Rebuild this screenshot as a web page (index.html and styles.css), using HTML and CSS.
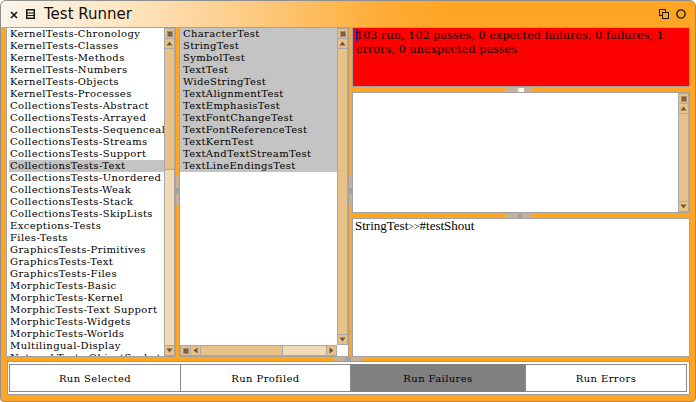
FILE: index.html
```html
<!DOCTYPE html>
<html>
<head>
<meta charset="utf-8">
<link rel="stylesheet" href="styles.css">
</head>
<body>
<div class="window">
  <div class="titlebar">
    <svg class="ic-close" width="8" height="8" viewBox="0 0 8 8"><path d="M1 1L7 7M7 1L1 7" stroke="#1a1a1a" stroke-width="1.7"/></svg>
    <svg class="ic-menu" width="9" height="10" viewBox="0 0 9 10"><rect x="0.75" y="0.75" width="7.5" height="8.5" fill="none" stroke="#1a1a1a" stroke-width="1.5"/><path d="M1 4h7M1 6.5h7" stroke="#1a1a1a" stroke-width="1"/></svg>
    <span class="title">Test Runner</span>
    <span class="tb-right">
      <svg class="ic-collapse" width="10" height="10" viewBox="0 0 10 10"><rect x="0.5" y="0.5" width="6" height="6" fill="none" stroke="#1a1a1a"/><rect x="3.5" y="3.5" width="6" height="6" fill="#ffa524" stroke="#1a1a1a"/></svg>
      <svg class="ic-circle" width="10" height="10" viewBox="0 0 10 10"><circle cx="5" cy="5" r="4.1" fill="none" stroke="#1a1a1a" stroke-width="1.4"/></svg>
    </span>
  </div>

  <div class="main">
    <div class="pane lpane">
      <ul class="list cats">
        <li>KernelTests-Chronology</li>
        <li>KernelTests-Classes</li>
        <li>KernelTests-Methods</li>
        <li>KernelTests-Numbers</li>
        <li>KernelTests-Objects</li>
        <li>KernelTests-Processes</li>
        <li>CollectionsTests-Abstract</li>
        <li>CollectionsTests-Arrayed</li>
        <li>CollectionsTests-Sequenceable</li>
        <li>CollectionsTests-Streams</li>
        <li>CollectionsTests-Support</li>
        <li class="sel">CollectionsTests-Text</li>
        <li>CollectionsTests-Unordered</li>
        <li>CollectionsTests-Weak</li>
        <li>CollectionsTests-Stack</li>
        <li>CollectionsTests-SkipLists</li>
        <li>Exceptions-Tests</li>
        <li>Files-Tests</li>
        <li>GraphicsTests-Primitives</li>
        <li>GraphicsTests-Text</li>
        <li>GraphicsTests-Files</li>
        <li>MorphicTests-Basic</li>
        <li>MorphicTests-Kernel</li>
        <li>MorphicTests-Text Support</li>
        <li>MorphicTests-Widgets</li>
        <li>MorphicTests-Worlds</li>
        <li>Multilingual-Display</li>
        <li>NetworkTests-ObjectSocket</li>
      </ul>
      <div class="vs">
        <div class="btn"><span class="sq"></span></div>
        <div class="btn"><svg width="7" height="5" viewBox="0 0 7 5"><path d="M0.5 4.5H6.5L3.5 0.5Z" fill="#6f5737"/></svg></div>
        <div class="trk"><div class="thumb cat-thumb"></div></div>
        <div class="btn"><svg width="7" height="5" viewBox="0 0 7 5"><path d="M0.5 0.5H6.5L3.5 4.5Z" fill="#6f5737"/></svg></div>
      </div>
    </div>

    <div class="vgap"><div class="vhandle"></div></div>

    <div class="pane mpane">
      <ul class="list classes">
        <li class="sel">CharacterTest</li>
        <li class="sel">StringTest</li>
        <li class="sel">SymbolTest</li>
        <li class="sel">TextTest</li>
        <li class="sel">WideStringTest</li>
        <li class="sel">TextAlignmentTest</li>
        <li class="sel">TextEmphasisTest</li>
        <li class="sel">TextFontChangeTest</li>
        <li class="sel">TextFontReferenceTest</li>
        <li class="sel">TextKernTest</li>
        <li class="sel">TextAndTextStreamTest</li>
        <li class="sel">TextLineEndingsTest</li>
      </ul>
      <div class="vs">
        <div class="btn"><span class="sq"></span></div>
        <div class="btn"><svg width="7" height="5" viewBox="0 0 7 5"><path d="M0.5 4.5H6.5L3.5 0.5Z" fill="#6f5737"/></svg></div>
        <div class="trk"><div class="thumb full"></div></div>
        <div class="btn"><svg width="7" height="5" viewBox="0 0 7 5"><path d="M0.5 0.5H6.5L3.5 4.5Z" fill="#6f5737"/></svg></div>
      </div>
      <div class="hs">
        <div class="btn"><span class="sq"></span></div>
        <div class="btn"><svg width="5" height="7" viewBox="0 0 5 7"><path d="M4.5 0.5V6.5L0.5 3.5Z" fill="#6f5737"/></svg></div>
        <div class="trk"><div class="thumb h-thumb"></div></div>
        <div class="btn"><svg width="5" height="7" viewBox="0 0 5 7"><path d="M0.5 0.5V6.5L4.5 3.5Z" fill="#6f5737"/></svg></div>
      </div>
      <div class="corner"></div>
    </div>

    <div class="vgap"><div class="vhandle"></div></div>

    <div class="rcol">
      <div class="result"><span class="cursor"></span>103 run, 102 passes, 0 expected failures, 0 failures, 1 errors, 0 unexpected passes</div>
      <div class="hgap"><div class="hhandle ha"></div></div>
      <div class="pane tpane p2">
        <div class="tarea"></div>
        <div class="vs">
          <div class="btn"><span class="sq"></span></div>
          <div class="btn"><svg width="7" height="5" viewBox="0 0 7 5"><path d="M0.5 4.5H6.5L3.5 0.5Z" fill="#6f5737"/></svg></div>
          <div class="trk"><div class="thumb full"></div></div>
          <div class="btn"><svg width="7" height="5" viewBox="0 0 7 5"><path d="M0.5 0.5H6.5L3.5 4.5Z" fill="#6f5737"/></svg></div>
        </div>
      </div>
      <div class="hgap"><div class="hhandle hb"></div></div>
      <div class="pane tpane p3">
        <div class="tarea failure">StringTest<span class="gg">&gt;&gt;</span>#testShout</div>
      </div>
    </div>
  </div>

  <div class="bgap"><div class="bhandle"></div></div>

  <div class="buttons">
    <div class="b b1">Run Selected</div>
    <div class="b b2">Run Profiled</div>
    <div class="b b3">Run Failures</div>
    <div class="b b4">Run Errors</div>
  </div>
</div>
</body>
</html>
```

FILE: styles.css
```css
* { box-sizing: border-box; }
html, body { margin: 0; padding: 0; background: #ffffff; }

.window {
  width: 696px;
  height: 402px;
  border: 1px solid #8f8f8f;
  border-radius: 6px 6px 4px 4px;
  background: #ffa524;
  padding: 0 5px;
  display: flex;
  flex-direction: column;
  overflow: hidden;
  font-family: "DejaVu Serif", serif;
  font-size: 10px;
  color: #000;
}

.titlebar {
  margin: 0 -5px;
  height: 26px;
  flex: none;
  display: flex;
  align-items: center;
  padding: 0 9px 0 9px;
  background: linear-gradient(to right, #fbf4e8 0%, #fde8c6 16%, #fdcb84 36%, #ffad38 54%, #ffa524 64%);
}
.ic-close { flex: none; margin-top: 1px; }
.ic-menu { flex: none; margin-left: 8px; }
.title {
  margin-left: 9px;
  font-family: "DejaVu Sans", sans-serif;
  font-size: 15px;
  color: #111;
}
.tb-right { margin-left: auto; display: flex; align-items: center; }
.ic-collapse { margin-right: 7px; }

.main { display: flex; height: 330px; flex: none; }

.pane { border: 1px solid #a3a3a3; background: #fff; }

.lpane { width: 170px; flex: none; display: flex; }
.list {
  margin: 0;
  list-style: none;
  overflow: hidden;
  white-space: nowrap;
  line-height: 12px;
  letter-spacing: 0.4px;
  background: #fff;
}
.list li { height: 12px; }
.cats { flex: 1; padding: 0 0 0 2px; }
.cats li { padding-left: 1px; }
.classes { padding: 0; letter-spacing: 0.35px; }
.classes li { padding-left: 3px; }
.sel { background: #c4c4c4; }

.mpane {
  width: 170px;
  flex: none;
  display: grid;
  grid-template-columns: 157px 11px;
  grid-template-rows: 1fr 11px;
}
.corner { background: #fff; }

.vs {
  width: 11px;
  flex: none;
  display: flex;
  flex-direction: column;
  gap: 1px;
  padding: 1px;
  background: #a8a8a8;
}
.hs {
  height: 11px;
  display: flex;
  gap: 1px;
  padding: 1px;
  background: #a8a8a8;
}
.btn {
  flex: none;
  width: 9px;
  height: 9px;
  background: #e8c189;
  display: flex;
  align-items: center;
  justify-content: center;
}
.sq {
  width: 6px;
  height: 6px;
  background: #7a6141;
  border: 1px solid #a88b62;
}
.trk { flex: 1; background: #f2dab6; display: flex; flex-direction: column; }
.hs .trk { flex-direction: row; }
.thumb { background: #e8c189; }
.cat-thumb { height: 121px; border-bottom: 1px solid #a8a8a8; }
.thumb.full { flex: 1; }
.h-thumb { width: 82px; border-right: 1px solid #a8a8a8; }

.vgap { width: 3px; flex: none; padding-top: 149px; }
.vhandle {
  width: 3px;
  height: 30px;
  background: linear-gradient(to bottom, #c8b293 0 12px, #a3a3a3 12px 18px, #c8b293 18px 30px);
}

.rcol { flex: 1; display: flex; flex-direction: column; }
.result {
  height: 60px;
  flex: none;
  background: #ff0000;
  border: 1px solid #a3a3a3;
  padding: 1px 3px;
  font-size: 11px;
  letter-spacing: 0.15px;
  line-height: 14px;
}
.cursor {
  display: inline-block;
  width: 2px;
  height: 12px;
  margin-right: -2px;
  vertical-align: -2px;
  background: #1c1cc8;
}
.hgap { height: 5px; flex: none; display: flex; align-items: center; padding-left: 154px; }
.hhandle { width: 25px; height: 4px; }
.ha { background: linear-gradient(to right, #c8b293 0 11px, #d9ccb8 11px 13px, #ffffff 13px 18px, #c8b293 18px 25px); }
.hb { background: linear-gradient(to right, #c8b293 0 12px, #a3a3a3 12px 17px, #c8b293 17px 25px); }

.tpane { display: flex; }
.p2 { height: 121px; flex: none; }
.p3 { flex: 1; }
.tarea { flex: 1; padding: 0 2px; background: #fff; }
.failure {
  font-family: "Liberation Serif", serif;
  font-size: 13px;
  line-height: 11px;
  padding-top: 1px;
}
.gg { font-size: 10px; }

.bgap { height: 4px; flex: none; display: flex; align-items: center; padding-left: 327px; }
.bhandle {
  width: 30px;
  height: 4px;
  background: linear-gradient(to right, #c8b293 0 12px, #a3a3a3 12px 18px, #c8b293 18px 30px);
}

.buttons {
  height: 34px;
  width: 683px;
  margin-left: 1px;
  flex: none;
  border: 1px solid #9a9a9a;
  background: #fff;
  padding: 2px 2px 2px 1px;
  display: flex;
  letter-spacing: 0.4px;
}
.b {
  height: 28px;
  display: flex;
  align-items: center;
  justify-content: center;
  border: 1px solid #8a8a8a;
  background: #fff;
}
.b1 { width: 172px; }
.b2 { width: 170px; border-left: none; }
.b3 { width: 174px; background: #808080; border-color: #808080; }
.b4 { flex: 1; }
```
